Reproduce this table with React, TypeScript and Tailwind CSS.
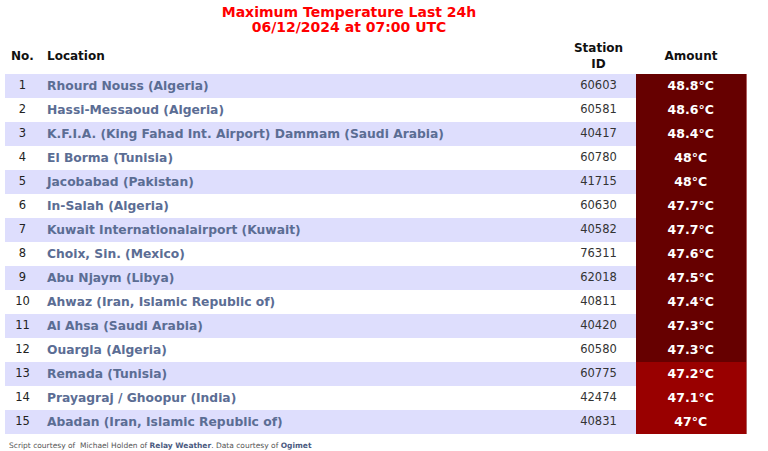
import React from "react";

interface Row {
  no: number;
  location: string;
  station: string;
  amount: string;
}

const rows: Row[] = [
  { no: 1, location: "Rhourd Nouss (Algeria)", station: "60603", amount: "48.8°C" },
  { no: 2, location: "Hassi-Messaoud (Algeria)", station: "60581", amount: "48.6°C" },
  { no: 3, location: "K.F.I.A. (King Fahad Int. Airport) Dammam (Saudi Arabia)", station: "40417", amount: "48.4°C" },
  { no: 4, location: "El Borma (Tunisia)", station: "60780", amount: "48°C" },
  { no: 5, location: "Jacobabad (Pakistan)", station: "41715", amount: "48°C" },
  { no: 6, location: "In-Salah (Algeria)", station: "60630", amount: "47.7°C" },
  { no: 7, location: "Kuwait Internationalairport (Kuwait)", station: "40582", amount: "47.7°C" },
  { no: 8, location: "Choix, Sin. (Mexico)", station: "76311", amount: "47.6°C" },
  { no: 9, location: "Abu Njaym (Libya)", station: "62018", amount: "47.5°C" },
  { no: 10, location: "Ahwaz (Iran, Islamic Republic of)", station: "40811", amount: "47.4°C" },
  { no: 11, location: "Al Ahsa (Saudi Arabia)", station: "40420", amount: "47.3°C" },
  { no: 12, location: "Ouargla (Algeria)", station: "60580", amount: "47.3°C" },
  { no: 13, location: "Remada (Tunisia)", station: "60775", amount: "47.2°C" },
  { no: 14, location: "Prayagraj / Ghoopur (India)", station: "42474", amount: "47.1°C" },
  { no: 15, location: "Abadan (Iran, Islamic Republic of)", station: "40831", amount: "47°C" },
];

export default function App() {
  return (
    <div className="w-[768px] h-[451px] bg-white font-['DejaVu_Sans',Verdana,sans-serif] overflow-hidden">
      <div className="w-[698px] pt-[5px] text-center text-[14px] leading-[15px] font-bold text-[#ff0000]">
        <div>Maximum Temperature Last 24h</div>
        <div>06/12/2024 at 07:00 UTC</div>
      </div>
      <table className="ml-[5px] mt-[3px] w-[742px] border-collapse text-[11.5px]">
        <thead>
          <tr className="h-[36px] text-[#111] font-bold text-[12px] leading-[16px]">
            <th className="w-[35px] text-center">No.</th>
            <th className="text-left pl-[7px]">Location</th>
            <th className="w-[74px] text-center">
              Station
              <br />
              ID
            </th>
            <th className="w-[111px] text-center">Amount</th>
          </tr>
        </thead>
        <tbody>
          {rows.map((r) => (
            <tr
              key={r.no}
              className={`h-[24px] ${r.no % 2 === 1 ? "bg-[#dedefd]" : "bg-white"}`}
            >
              <td className="text-center text-[#222]">{r.no}</td>
              <td className="pl-[7px] font-bold text-[12.3px] text-[#5b6d94]">{r.location}</td>
              <td className="text-center text-[#333]">{r.station}</td>
              <td
                className={`text-center font-bold text-[12.5px] text-white border-r border-[#b06060] ${
                  r.no <= 12 ? "bg-[#660000]" : "bg-[#990000]"
                }`}
              >
                {r.amount}
              </td>
            </tr>
          ))}
        </tbody>
      </table>
      <div className="pl-[9px] pt-[7px] text-[7.5px] leading-[10px] text-[#555]">
        Script courtesy of&nbsp; Michael Holden of{" "}
        <span className="font-bold text-[#4a5a80]">Relay Weather</span>. Data courtesy of{" "}
        <span className="font-bold text-[#4a5a80]">Ogimet</span>
      </div>
    </div>
  );
}
